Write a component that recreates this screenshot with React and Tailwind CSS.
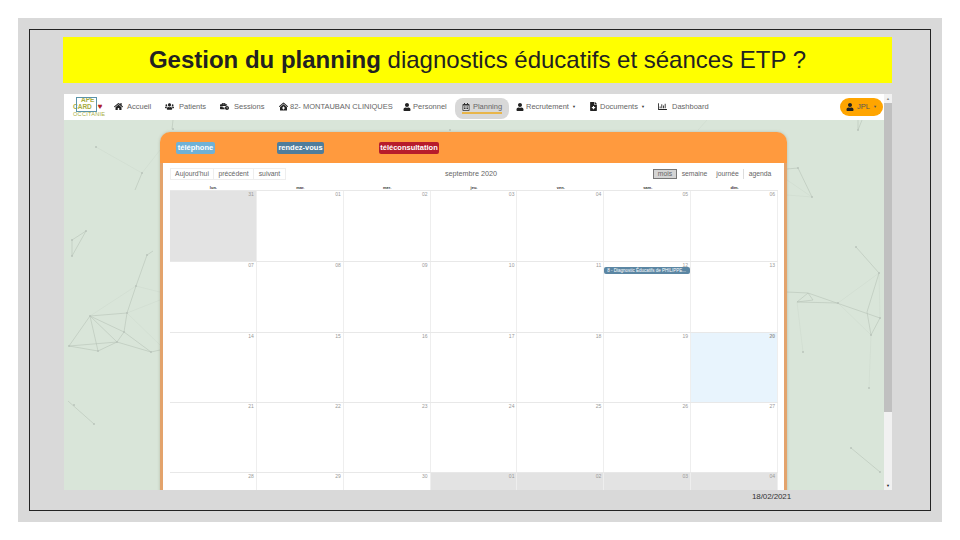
import React from "react";
import {
  FaHome,
  FaUsers,
  FaBusinessTime,
  FaClinicMedical,
  FaUser,
  FaRegCalendarAlt,
  FaFileMedical,
  FaRegChartBar,
} from "react-icons/fa";

const weekDays = ["lun.", "mar.", "mer.", "jeu.", "ven.", "sam.", "dim."];

const weeks = [
  { h: "h-[71px]", days: ["31", "01", "02", "03", "04", "05", "06"], off: [0] },
  { h: "h-[71px]", days: ["07", "08", "09", "10", "11", "12", "13"], off: [] },
  { h: "h-[70px]", days: ["14", "15", "16", "17", "18", "19", "20"], off: [], today: 6 },
  { h: "h-[70px]", days: ["21", "22", "23", "24", "25", "26", "27"], off: [] },
  { h: "h-[70px]", days: ["28", "29", "30", "01", "02", "03", "04"], off: [3, 4, 5, 6] },
];

function NavItem({ label, icon: Icon, caret, width, box, size = 9 }) {
  return (
    <div className={"flex items-center text-[7.5px] text-[#666] whitespace-nowrap shrink-0 " + width}>
      <span className={"shrink-0 " + box}>
        <Icon size={size} className="text-[#222]" />
      </span>
      <span>{label}</span>
      {caret && <span className="ml-[3px] text-[4px] text-[#333]">▼</span>}
    </div>
  );
}

function Network() {
  // constellation lines behind the card, in page coordinates
  const dots = [
    [86, 231], [72, 240], [72, 256], [147, 255], [136, 286], [127, 313], [90, 316], [124, 332], [117, 342],
    [98, 351], [69, 346], [151, 352], [74, 405], [94, 424], [96, 147], [142, 173], [798, 168], [812, 197],
    [856, 247], [879, 273], [880, 318], [871, 335], [838, 303], [803, 352], [869, 388], [851, 448], [880, 472],
    [858, 130], [173, 129], [450, 130],
  ];
  return (
    <svg className="absolute left-0 top-0" width="828" height="396" viewBox="64 94 828 396" fill="none" strokeWidth="0.5">
      <g stroke="#ccd8cd">
        <path d="M96 147 L142 173 L160 150" />
        <path d="M127 313 L160 300 M136 286 L160 292 M90 316 L136 286 M127 313 L160 345" />
        <path d="M787 195 L812 197 M787 180 L812 197 M707 120 L698 130" />
        <path d="M879 273 L838 303 L871 335 M871 335 L869 388 M797 302 L803 352 M879 273 L880 318" />
      </g>
      <g stroke="#b0bcb1">
        <path d="M86 231 L72 240 L72 256 Z" />
        <path d="M153 251 L147 255 L136 286 L127 313 L124 332 L117 342 L98 351 L69 346 L90 316 L127 313" />
        <path d="M90 316 L98 351 M90 316 L117 342 M90 316 L124 332 L151 352 M117 342 L151 352 L160 350 M69 346 L117 342" />
        <path d="M68 401 L94 424" />
        <path d="M142 173 L135 190 M173 120 L172 129 M858 120 L858 130 L862 120" />
        <path d="M787 169 L798 168 L812 197" />
        <path d="M856 247 L879 273 L867 312 L871 335 L880 318 L808 293 L787 292" />
        <path d="M797 302 L808 293 L813 300 Z M797 302 L838 303 M851 448 L880 472" />
      </g>
      <g fill="#bac5bb">
        {dots.map(([x, y]) => (
          <circle key={x + "-" + y} cx={x} cy={y} r="1" />
        ))}
      </g>
    </svg>
  );
}

export default function App() {
  return (
    <div className="w-[960px] h-[540px] bg-white p-[18px] font-['Liberation_Sans',Arial,sans-serif]">
      <div className="h-[504px] bg-[#d9d9d9] p-[11px]">
        <div className="h-[482px] border border-[#222] pt-[7px] pl-[33px] pr-[38px] flex flex-col">
          <div className="h-[46px] w-[829px] bg-[#ffff00] flex items-center justify-center text-[24px] text-[#222]">
            <span><b>Gestion du planning</b> diagnostics éducatifs et séances ETP ?</span>
          </div>

          <div className="relative mt-[11px] ml-px w-[828px] h-[396px] bg-[#d9e5d9] overflow-hidden flex flex-col">
            <Network />

            <div className="relative h-[26px] shrink-0 bg-white flex items-center pl-[9px] pr-[9px] pb-px">
              {/* logo */}
              <div className="relative w-[41px] h-[22px] shrink-0 text-[6.5px] leading-[7px] text-[#a8ad3f]">
                <div className="absolute left-[3px] top-[1px] w-[21px] h-[15px] border border-[#5a93a8]" />
                <div className="pl-[8px] font-bold">APE</div>
                <div className="flex h-[7px] items-center font-bold">
                  CARD<span className="ml-[6px] text-[8px] text-[#b0202a]">♥</span>
                </div>
                <div className="text-[5.6px] leading-[8px] tracking-[0.25px]">OCCITANIE</div>
              </div>
              <NavItem label="Accueil" icon={FaHome} width="w-[51px]" box="w-[13px]" />
              <NavItem label="Patients" icon={FaUsers} width="w-[55px]" box="w-[14px]" />
              <NavItem label="Sessions" icon={FaBusinessTime} width="w-[59px]" box="w-[14px]" />
              <NavItem label="82- MONTAUBAN CLINIQUES" icon={FaClinicMedical} width="w-[124px]" box="w-[11px]" />
              <NavItem label="Personnel" icon={FaUser} width="w-[52px]" box="w-[10px]" size={8} />
              <div className="w-[54px] h-[21px] mt-[3px] shrink-0 rounded-[8px] bg-[#d8d8d8] flex items-center justify-center">
                <div className="flex items-center text-[7.5px] leading-[9px] text-[#666] border-b-2 border-[#e8b54a] pb-px">
                  <span className="w-[11px]">
                    <FaRegCalendarAlt size={8} className="text-[#333]" />
                  </span>
                  <span>Planning</span>
                </div>
              </div>
              <div className="w-[7px] shrink-0" />
              <NavItem label="Recrutement" icon={FaUser} caret width="w-[73px]" box="w-[10px]" size={8} />
              <NavItem label="Documents" icon={FaFileMedical} caret width="w-[69px]" box="w-[11px]" />
              <NavItem label="Dashboard" icon={FaRegChartBar} width="w-[60px]" box="w-[14px]" />
              <div className="ml-auto w-[43px] h-[18px] rounded-[9px] bg-[#ffa500] flex items-center justify-center gap-[3px] text-[7.5px] text-[#555]">
                <FaUser size={8} className="text-[#222]" />
                <span>JPL</span>
                <span className="text-[4px]">▼</span>
              </div>
            </div>

            {/* orange card */}
            <div className="relative ml-[96px] mt-[12px] w-[627px] h-[400px] shrink-0 flex flex-col rounded-t-[10px] shadow-[0_0_3px_rgba(120,110,80,0.35)]">
              <div className="h-[31px] shrink-0 rounded-t-[10px] bg-[#ff9a3e] flex items-center text-[7.5px] font-bold text-white whitespace-nowrap">
                <span className="ml-[16px] w-[39px] h-[12px] flex items-center justify-center rounded-[2px] bg-[#6fb1d6]">téléphone</span>
                <span className="ml-[62px] w-[47px] h-[12px] flex items-center justify-center rounded-[2px] bg-[#4f7d9c]">rendez-vous</span>
                <span className="ml-[55px] w-[60px] h-[12px] flex items-center justify-center rounded-[2px] bg-[#b71c2b]">téléconsultation</span>
              </div>
              <div className="flex-1 bg-white border-x-[3px] border-[#e3a36c] pl-[7px]">
                <div className="h-[22px] flex items-center text-[6.8px] text-[#666] whitespace-nowrap">
                  <div className="flex">
                    <span className="w-[44px] h-[12px] leading-[10px] text-center border border-[#eeeeee]">Aujourd'hui</span>
                    <span className="w-[40px] h-[12px] leading-[10px] text-center border-y border-r border-[#eeeeee]">précédent</span>
                    <span className="w-[32px] h-[12px] leading-[10px] text-center border-y border-r border-[#eeeeee]">suivant</span>
                  </div>
                  <span className="ml-[159px] text-[7.2px]">septembre 2020</span>
                  <div className="ml-auto mr-[8px] flex items-center">
                    <span className="w-[24px] h-[10px] leading-[8px] text-center bg-[#d4d4d4] border border-[#777]">mois</span>
                    <span className="w-[35px] text-center">semaine</span>
                    <span className="w-[32px] text-center border-r border-[#ddd]">journée</span>
                    <span className="w-[32px] text-center">agenda</span>
                  </div>
                </div>
                <div className="w-[608px]">
                  <div className="grid grid-cols-7 h-[6px] border-b border-[#e8e8e8] text-[4px] leading-[5px] font-bold text-center text-[#333]">
                    {weekDays.map((d) => <div key={d}>{d}</div>)}
                  </div>
                  {weeks.map((w, i) => (
                    <div key={i} className={"grid grid-cols-7 border-b border-[#e8e8e8] " + w.h}>
                      {w.days.map((d, j) => (
                        <div
                          key={j}
                          className={
                            "relative border-r border-[#eeeeee] pr-[2px] text-right text-[5px] leading-[6px] text-[#999] " +
                            (w.off.includes(j) ? "bg-[#e3e3e3] " : "") +
                            (w.today === j ? "bg-[#e8f4fd] font-bold text-[#666]" : "")
                          }
                        >
                          {d}
                          {i === 1 && j === 5 && (
                            <div className="absolute left-0 top-[5px] w-[86px] h-[7px] rounded-[2px] bg-[#5b86a3] text-white text-[4.5px] leading-[7px] text-left pl-[3px] whitespace-nowrap overflow-hidden">
                              8 - Diagnostic Éducatifs de PHILIPPE...
                            </div>
                          )}
                        </div>
                      ))}
                    </div>
                  ))}
                </div>
              </div>
            </div>

            {/* scrollbar */}
            <div className="absolute right-0 top-0 bottom-0 w-[8px] bg-[#f1f1f1] flex flex-col">
              <div className="h-[9px] text-[4px] leading-[9px] text-center text-[#888]">▲</div>
              <div className="h-[309px] bg-[#c0c0c0]" />
              <div className="mt-auto h-[9px] text-[4px] leading-[9px] text-center text-[#222]">▼</div>
            </div>
          </div>

          <div className="mt-[2px] pl-[689px] text-[8px] leading-[10px] tracking-[-0.1px] text-[#333]">18/02/2021</div>
        </div>
      </div>
    </div>
  );
}
